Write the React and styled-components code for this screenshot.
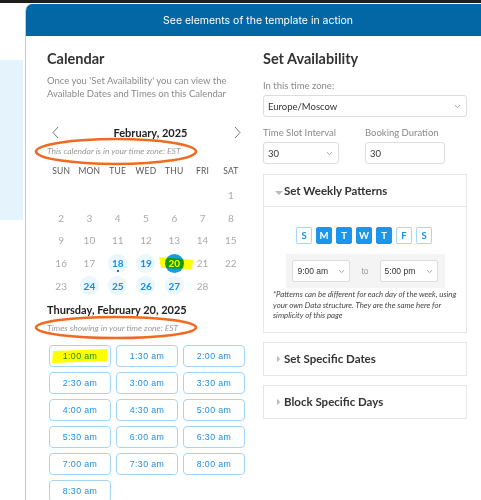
import React from 'react';
import styled, { createGlobalStyle } from 'styled-components';

const GlobalStyle = createGlobalStyle`
  body {
    margin: 0;
    background: #fff;
    overflow: hidden;
    font-family: Lato, "Open Sans", sans-serif;
  }
`;

const weekdays = ['SUN', 'MON', 'TUE', 'WED', 'THU', 'FRI', 'SAT'];
const available = [18, 19, 24, 25, 26, 27];
const times = [
  '1:00 am', '1:30 am', '2:00 am', '2:30 am', '3:00 am', '3:30 am',
  '4:00 am', '4:30 am', '5:00 am', '5:30 am', '6:00 am', '6:30 am',
  '7:00 am', '7:30 am', '8:00 am', '8:30 am',
];
const patternDays = [
  { l: 'S', on: false }, { l: 'M', on: true }, { l: 'T', on: true },
  { l: 'W', on: true }, { l: 'T', on: true }, { l: 'F', on: false }, { l: 'S', on: false },
];

const Chevron = () => (
  <svg width="7" height="5" viewBox="0 0 7 5">
    <path d="M1 1.2 L3.5 3.6 L6 1.2" fill="none" stroke="#999" strokeWidth="0.9" />
  </svg>
);

const Ellipse = ({ top, height }) => (
  <EllipseSvg style={{ top }} width="166" height={height} viewBox={`0 0 166 ${height}`}>
    <ellipse cx="83" cy={height / 2} rx="80" ry={height / 2 - 2} fill="none" stroke="#f26a21" strokeWidth="2.6" />
  </EllipseSvg>
);

const App = () => {
  const cells = [];
  for (let i = 0; i < 6; i++) cells.push(null);
  for (let d = 1; d <= 28; d++) cells.push(d);

  return (
    <>
      <GlobalStyle />
      <TopBar />
      <Main>
        <SideStrip />
        <Panel>
          <PanelHeader>See elements of the template in action</PanelHeader>
          <PanelBody>
            <Column>
              <Title>Calendar</Title>
              <Lead>
                Once you 'Set Availability' you can view the<br />
                Available Dates and Times on this Calendar
              </Lead>
              <MonthNav>
                <NavArrow viewBox="0 0 7 13">
                  <path d="M6 1 L1 6.5 L6 12" />
                </NavArrow>
                <MonthLabel>February, 2025</MonthLabel>
                <NavArrow viewBox="0 0 7 13">
                  <path d="M1 1 L6 6.5 L1 12" />
                </NavArrow>
              </MonthNav>
              <ZoneNote>
                This calendar is in your time zone: EST
                <Ellipse top="-8px" height={29} />
              </ZoneNote>
              <WeekRow>
                {weekdays.map((w) => <WeekLabel key={w}>{w}</WeekLabel>)}
              </WeekRow>
              <DayGrid>
                {cells.map((d, i) => (
                  <DayCell key={i}>
                    {d && (
                      <Day
                        $available={available.includes(d)}
                        $selected={d === 20}
                      >
                        {d}
                        {d === 18 && <Dot />}
                      </Day>
                    )}
                    {d === 20 && <DayMark viewBox="0 0 36 14"><path d="M1 1 L35 4 L34 13 L3 12 Z" /></DayMark>}
                  </DayCell>
                ))}
              </DayGrid>
              <DateTitle>Thursday, February 20, 2025</DateTitle>
              <ZoneNote>
                Times showing in your time zone: EST
                <Ellipse top="-7px" height={25} />
              </ZoneNote>
              <TimeGrid>
                {times.map((t, i) => (
                  <TimeButton key={t}>
                    {t}
                    {i === 0 && <TimeMark viewBox="0 0 56 14"><path d="M1 2 L55 0 L55 12 L0 14 Z" /></TimeMark>}
                  </TimeButton>
                ))}
              </TimeGrid>
            </Column>

            <Column>
              <Title>Set Availability</Title>
              <Label>In this time zone:</Label>
              <Select $width="204px">
                Europe/Moscow
                <Chevron />
              </Select>
              <FieldRow>
                <Field>
                  <Label>Time Slot Interval</Label>
                  <Select $width="76px">30<Chevron /></Select>
                </Field>
                <Field>
                  <Label>Booking Duration</Label>
                  <Input $width="80px">30</Input>
                </Field>
              </FieldRow>

              <Card>
                <CardHeader $open>
                  <Caret viewBox="0 0 8 5" $open><path d="M0 0 L8 0 L4 4 Z" /></Caret>
                  Set Weekly Patterns
                </CardHeader>
                <CardBody>
                  <DayPicks>
                    {patternDays.map((p, i) => (
                      <DayPick key={i} $on={p.on}>{p.l}</DayPick>
                    ))}
                  </DayPicks>
                  <HoursBox>
                    <SmallSelect>9:00 am<Chevron /></SmallSelect>
                    <ToText>to</ToText>
                    <SmallSelect>5:00 pm<Chevron /></SmallSelect>
                  </HoursBox>
                  <Footnote>
                    *Patterns can be different for each day of the week, using<br />
                    your own Data structure. They are the same here for<br />
                    simplicity of this page
                  </Footnote>
                </CardBody>
              </Card>

              <Card $gap="9px">
                <CardHeader>
                  <Caret viewBox="0 0 5 8"><path d="M0 0 L4 4 L0 8 Z" /></Caret>
                  Set Specific Dates
                </CardHeader>
              </Card>
              <Card $gap="9px">
                <CardHeader>
                  <Caret viewBox="0 0 5 8"><path d="M0 0 L4 4 L0 8 Z" /></Caret>
                  Block Specific Days
                </CardHeader>
              </Card>
            </Column>
          </PanelBody>
        </Panel>
      </Main>
    </>
  );
};

const TopBar = styled.div`
  height: 3px;
  background: #1e1e1e;
`;

const Main = styled.div`
  display: flex;
  align-items: flex-start;
  gap: 2px;
  margin-top: 1px;
`;

const SideStrip = styled.div`
  width: 23px;
  height: 160px;
  margin-top: 56px;
  flex-shrink: 0;
  background: #e4f3fc;
`;

const Panel = styled.div`
  width: 464px;
  flex-shrink: 0;
  min-height: 500px;
  border-left: 1px solid #a6d3f0;
  border-radius: 7px 7px 0 0;
  overflow: hidden;
`;

const PanelHeader = styled.div`
  height: 32px;
  background: #0467a5;
  color: #fff;
  font-family: Inter, "Liberation Sans", sans-serif;
  font-size: 10.5px;
  display: flex;
  align-items: center;
  justify-content: center;
`;

const PanelBody = styled.div`
  display: grid;
  grid-template-columns: 198px 204px;
  column-gap: 18px;
  padding: 12px 21px 0 21px;
`;

const Column = styled.div`
  display: flex;
  flex-direction: column;
  align-items: flex-start;
`;

const Title = styled.h2`
  margin: 0;
  font-size: 14.5px;
  line-height: 22px;
  font-weight: 700;
  color: #333;
`;

const Lead = styled.p`
  margin: 5px 0 0;
  font-size: 9.5px;
  line-height: 12.5px;
  color: #8a8a8a;
`;

const MonthNav = styled.div`
  margin-top: 24px;
  width: 198px;
  height: 16px;
  display: flex;
  align-items: center;
  justify-content: space-between;
  padding: 0 4px 0 5px;
  box-sizing: border-box;
`;

const NavArrow = styled.svg`
  width: 7px;
  height: 13px;
  fill: none;
  stroke: #777;
  stroke-width: 1;
`;

const MonthLabel = styled.span`
  font-size: 11px;
  font-weight: 700;
  color: #222;
  margin-left: 8px;
`;

const ZoneNote = styled.div`
  position: relative;
  margin-top: 5px;
  font-size: 8.5px;
  line-height: 12px;
  font-style: italic;
  color: #999;
`;

const EllipseSvg = styled.svg`
  position: absolute;
  left: -14px;
  pointer-events: none;
`;

const WeekRow = styled.div`
  margin-top: 8px;
  width: 198px;
  display: grid;
  grid-template-columns: repeat(7, 1fr);
`;

const WeekLabel = styled.div`
  font-size: 8.5px;
  line-height: 12px;
  text-align: center;
  color: #555;
  letter-spacing: 0.2px;
`;

const DayGrid = styled.div`
  margin-top: 7px;
  width: 198px;
  display: grid;
  grid-template-columns: repeat(7, 1fr);
  grid-auto-rows: 22.6px;
`;

const DayCell = styled.div`
  position: relative;
  display: flex;
  align-items: center;
  justify-content: center;
`;

const Day = styled.span`
  position: relative;
  width: 19px;
  height: 19px;
  border-radius: 50%;
  display: flex;
  align-items: center;
  justify-content: center;
  font-size: 10px;
  font-weight: ${(p) => (p.$available || p.$selected ? 700 : 400)};
  color: ${(p) => (p.$selected ? '#fff' : p.$available ? '#168de6' : '#aaa')};
  background: ${(p) => (p.$selected ? '#179ae9' : p.$available ? '#ebf6fe' : 'transparent')};
`;

const Dot = styled.span`
  position: absolute;
  bottom: 1px;
  left: 50%;
  width: 2px;
  height: 2px;
  margin-left: -1px;
  border-radius: 50%;
  background: #333;
`;

const DayMark = styled.svg`
  position: absolute;
  left: -2px;
  top: 4px;
  width: 36px;
  height: 14px;
  fill: #ffff00;
  mix-blend-mode: multiply;
  pointer-events: none;
`;

const DateTitle = styled.div`
  margin-top: 6px;
  font-size: 11px;
  line-height: 14px;
  font-weight: 700;
  color: #222;
`;

const TimeGrid = styled.div`
  margin: 11px 0 0 2px;
  display: grid;
  grid-template-columns: repeat(3, 62px);
  grid-auto-rows: 22px;
  gap: 5px;
`;

const TimeButton = styled.div`
  position: relative;
  box-sizing: border-box;
  border: 1.5px solid #a3d5fb;
  border-radius: 4px;
  display: flex;
  align-items: center;
  justify-content: center;
  font-family: "Liberation Sans", Arial, sans-serif;
  font-size: 8.8px;
  letter-spacing: 0.4px;
  color: #1e8fe6;
`;

const TimeMark = styled.svg`
  position: absolute;
  left: 2px;
  top: 3px;
  width: 56px;
  height: 14px;
  fill: #ffff00;
  mix-blend-mode: multiply;
  pointer-events: none;
`;

const Label = styled.div`
  margin-top: 9px;
  font-size: 9.5px;
  line-height: 13px;
  color: #8a8a8a;
`;

const Select = styled.div`
  margin-top: 3px;
  width: ${(p) => p.$width};
  height: 22px;
  box-sizing: border-box;
  border: 1px solid #ddd;
  border-radius: 3px;
  padding: 0 5px 0 4px;
  display: flex;
  align-items: center;
  justify-content: space-between;
  font-size: 9.5px;
  color: #333;
`;

const Input = styled(Select)`
  justify-content: flex-start;
`;

const FieldRow = styled.div`
  display: grid;
  grid-template-columns: 102px 102px;
`;

const Field = styled.div`
  display: flex;
  flex-direction: column;
`;

const Card = styled.div`
  width: 204px;
  box-sizing: border-box;
  margin-top: ${(p) => p.$gap || '10px'};
  border: 1px solid #e6e6e6;
`;

const CardHeader = styled.div`
  height: 32px;
  box-sizing: border-box;
  border-bottom: ${(p) => (p.$open ? '1px solid #e6e6e6' : 'none')};
  display: flex;
  align-items: center;
  padding-left: ${(p) => (p.$open ? '11px' : '13px')};
  font-size: 11.5px;
  font-weight: 700;
  color: #333;
`;

const Caret = styled.svg`
  width: ${(p) => (p.$open ? '8px' : '4px')};
  height: ${(p) => (p.$open ? '5px' : '8px')};
  margin-top: ${(p) => (p.$open ? '5px' : '0')};
  margin-right: ${(p) => (p.$open ? '1px' : '3px')};
  fill: #bbb;
`;

const CardBody = styled.div`
  padding: 20px 9px 11px;
  display: flex;
  flex-direction: column;
  align-items: center;
`;

const DayPicks = styled.div`
  display: flex;
  gap: 3.5px;
  margin-left: -2px;
`;

const DayPick = styled.div`
  width: 16.5px;
  height: 17px;
  box-sizing: border-box;
  border-radius: 2px;
  border: 1px solid ${(p) => (p.$on ? '#1a96ef' : '#a6d6fb')};
  background: ${(p) => (p.$on ? '#1a96ef' : '#fff')};
  color: ${(p) => (p.$on ? '#fff' : '#1a8fe6')};
  display: flex;
  align-items: center;
  justify-content: center;
  font-size: 9.5px;
  font-weight: 700;
`;

const HoursBox = styled.div`
  margin-top: 10px;
  width: 159px;
  height: 34px;
  box-sizing: border-box;
  background: #f4f4f4;
  display: flex;
  align-items: center;
  justify-content: center;
  gap: 11px;
`;

const SmallSelect = styled.div`
  width: 58px;
  height: 22px;
  box-sizing: border-box;
  border: 1px solid #ddd;
  border-radius: 2px;
  background: #fff;
  padding: 0 4px;
  display: flex;
  align-items: center;
  justify-content: space-between;
  font-family: "Liberation Sans", Arial, sans-serif;
  font-size: 8.5px;
  color: #333;
`;

const ToText = styled.span`
  font-family: "Liberation Sans", Arial, sans-serif;
  font-size: 8.5px;
  color: #999;
`;

const Footnote = styled.div`
  align-self: flex-start;
  margin-top: 1px;
  font-size: 7.8px;
  line-height: 10.5px;
  font-style: italic;
  white-space: nowrap;
  color: #444;
`;

export default App;
